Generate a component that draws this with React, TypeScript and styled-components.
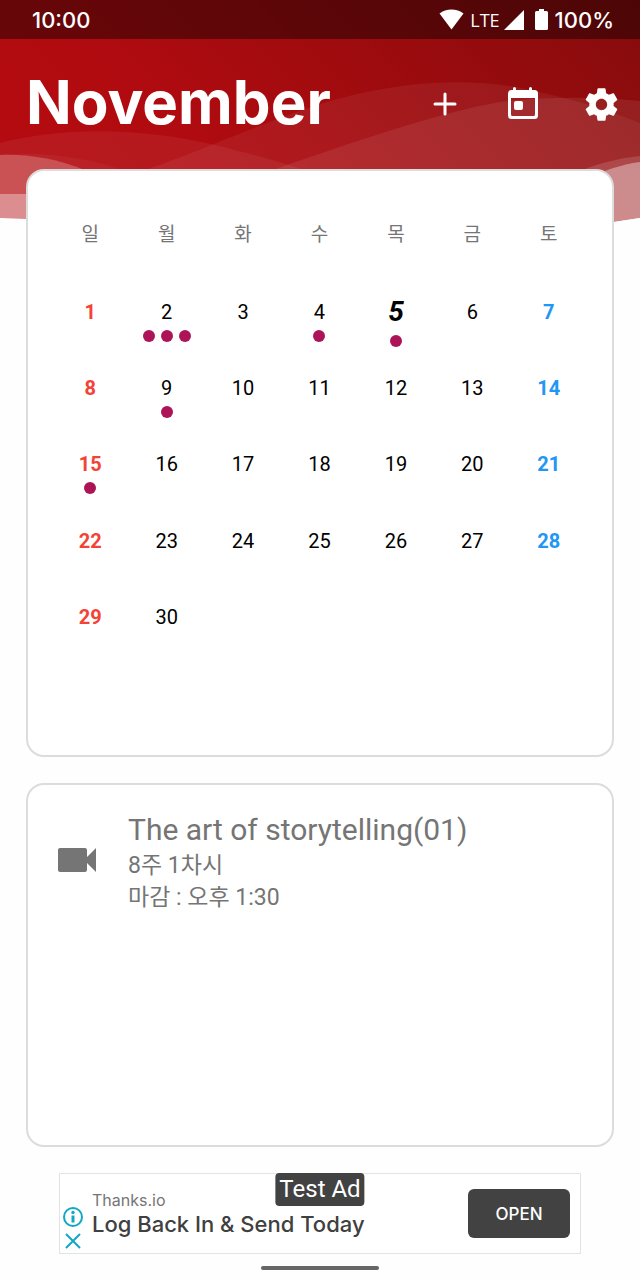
import React from "react";
import styled, { createGlobalStyle, css } from "styled-components";

const GlobalStyle = createGlobalStyle`
  *, *::before, *::after { box-sizing: border-box; }
  body {
    margin: 0;
    background: #fefefe;
    font-family: Roboto, "Noto Sans CJK KR", sans-serif;
    color: #000;
  }
`;

const Screen = styled.div`
  position: relative;
  min-height: 100vh;
  display: flex;
  flex-direction: column;
`;

const WaveBackdrop = styled.svg`
  position: absolute;
  top: 0;
  left: 0;
  z-index: -1;
  width: 100%;
  height: 224px;
`;

const StatusBar = styled.div`
  display: flex;
  align-items: center;
  justify-content: space-between;
  height: 39px;
  padding: 0 26px 0 32px;
  background: rgba(0, 0, 0, 0.42);
  color: #fff;
  font: 500 22px/28px Inter, sans-serif;
`;

const StatusIcons = styled.div`
  display: flex;
  align-items: center;
`;

const Network = styled.span`
  margin: 0 4px 0 6px;
  font: 400 18px/24px "Open Sans", sans-serif;
`;

const BatteryLevel = styled.span`
  margin-left: 7px;
`;

const SignalIcon = styled.svg`
  margin-right: 11px;
`;

const AppBar = styled.header`
  display: flex;
  align-items: center;
  height: 130px;
  padding-left: 26px;
  color: #fff;
`;

const MonthTitle = styled.h1`
  flex: 1;
  margin: 0;
  padding-bottom: 4px;
  font: 700 60px/72px Inter, sans-serif;
`;

const IconButton = styled.button`
  display: flex;
  align-items: center;
  justify-content: center;
  width: 78px;
  height: 78px;
  padding: 0;
  border: 0;
  background: none;
  color: inherit;
`;

const Content = styled.main`
  flex: 1;
  display: flex;
  flex-direction: column;
  gap: 26px;
  padding: 0 26px;
`;

const cardStyle = css`
  border: 2px solid #dcdcdc;
  border-radius: 18px;
  background: #fff;
`;

const CalendarCard = styled.section`
  ${cardStyle}
  padding: 26px 25px 23px 24px;
`;

const CalendarTable = styled.table`
  display: grid;
  grid-template: repeat(7, 1fr) / repeat(7, 1fr);
  aspect-ratio: 1;

  thead, tbody, tr { display: contents; }
`;

const Weekday = styled.th`
  display: flex;
  align-items: center;
  justify-content: center;
  padding: 0;
  color: #757575;
  font-weight: 400;
  font-size: 19px;
  line-height: 24px;
`;

type DayKind = "sunday" | "saturday" | "weekday";
const dayColors: Record<DayKind, string> = {
  sunday: "#f44336",
  saturday: "#2196f3",
  weekday: "#000",
};

const DayCell = styled.td`
  display: grid;
  grid-template-rows: 1fr auto 1fr;
  justify-items: center;
  padding: 0;
`;

const DayNumber = styled.span<{ $kind: DayKind; $today: boolean }>`
  grid-row: 2;
  color: ${(p) => dayColors[p.$kind]};
  font-size: ${(p) => (p.$today ? 28 : 20)}px;
  line-height: ${(p) => (p.$today ? 32 : 22)}px;
  font-weight: ${(p) => (p.$today || p.$kind !== "weekday" ? 700 : 400)};
  font-style: ${(p) => (p.$today ? "italic" : "normal")};
`;

const Dots = styled.span`
  grid-row: 3;
  display: flex;
  gap: 6px;
  margin-top: 7px;
`;

const Dot = styled.i`
  width: 12px;
  height: 12px;
  border-radius: 50%;
  background: #ad1457;
`;

const EventsCard = styled.section`
  ${cardStyle}
  flex: 1;
  padding: 27px 27px 27px 25px;
`;

const EventRow = styled.article`
  display: flex;
  align-items: flex-start;
  color: #757575;
`;

const EventIcon = styled.svg`
  flex: none;
  margin: 24px 27px 0 0;
`;

const EventTitle = styled.h2`
  margin: 0 0 2px;
  font-weight: 400;
  font-size: 30px;
  line-height: 36px;
`;

const EventLine = styled.p`
  margin: 0;
  font-size: 23px;
  line-height: 32px;
`;

const AdBanner = styled.aside`
  position: relative;
  display: flex;
  align-items: center;
  height: 81px;
  margin: 26px 59px 0;
  padding: 0 10px 0 3px;
  border: 1px solid #e3e3e3;
  background: #fff;
`;

const AdControls = styled.div`
  display: flex;
  flex-direction: column;
  align-self: flex-end;
  gap: 4px;
  padding-bottom: 2px;
`;

const AdControl = styled.button`
  display: flex;
  padding: 0;
  border: 0;
  background: none;
  color: #10a8c4;
`;

const AdText = styled.div`
  flex: 1;
  margin-left: 9px;
  padding-bottom: 2px;
`;

const AdSource = styled.p`
  margin: 0;
  color: #757575;
  font: 400 16px/22px Inter, sans-serif;
`;

const AdHeadline = styled.p`
  margin: 0;
  color: #404040;
  font: 500 22px/26px Inter, sans-serif;
`;

const AdLabel = styled.span`
  position: absolute;
  top: -1px;
  left: 50%;
  transform: translateX(-50%);
  padding: 0 4px;
  border-radius: 4px;
  background: #424242;
  color: #fff;
  font-size: 24px;
  line-height: 33px;
  white-space: nowrap;
`;

const OpenButton = styled.button`
  width: 102px;
  height: 49px;
  padding: 0;
  border: 0;
  border-radius: 6px;
  background: #424242;
  color: #fff;
  font: 500 17px/24px Inter, sans-serif;
`;

const HomeIndicator = styled.div`
  width: 118px;
  height: 4px;
  margin: 12px auto 10px;
  border-radius: 2px;
  background: #666;
`;

const weekdays = ["일", "월", "화", "수", "목", "금", "토"];
const eventCounts: Record<number, number> = { 2: 3, 4: 1, 5: 1, 9: 1, 15: 1 };
const today = 5;
const daysInMonth = 30;
const weeks = Array.from({ length: 5 }, (_, week) =>
  Array.from({ length: 7 }, (_, i) => week * 7 + i + 1)
);

function kindOf(column: number): DayKind {
  return column === 0 ? "sunday" : column === 6 ? "saturday" : "weekday";
}

function Waves() {
  return (
    <WaveBackdrop viewBox="0 0 640 224" preserveAspectRatio="none" aria-hidden="true">
      <defs>
        <linearGradient id="sky" gradientUnits="userSpaceOnUse" x1="0" y1="220" x2="450" y2="-230">
          <stop offset="0" stopColor="#b60b10" />
          <stop offset=".3" stopColor="#b00b10" />
          <stop offset="1" stopColor="#830c0c" />
        </linearGradient>
      </defs>
      <path fill="url(#sky)" d="M0 0H640V218L614 222H26L0 218Z" />
      <g fill="#fff">
        <path fillOpacity=".06" d="M0 143C60 127 140 127 215 145C260 156 290 165 305 170V224H0Z" />
        <path fillOpacity=".06" d="M145 170C200 152 290 110 345 97C400 83 470 76 530 90C580 101 610 111 640 123V224H145Z" />
        <path fillOpacity=".08" d="M265 173C340 146 440 112 500 102C550 96 600 97 640 101V224H265Z" />
        <path fillOpacity=".04" d="M0 155C40 151 85 157 122 170V224H0Z" />
        <path fillOpacity=".22" d="M0 155C25 154 55 158 85 170V224H0Z" />
        <path fillOpacity=".34" d="M0 194H30V224H0Z" />
        <path fillOpacity=".14" d="M582 170C600 163 620 158 640 156V224H582Z" />
        <path fillOpacity=".37" d="M605 171C615 167 630 163 640 162V224H605Z" />
      </g>
      <path fill="#fefefe" d="M0 218L26 219V224H0ZM614 222L640 218V224H614Z" />
    </WaveBackdrop>
  );
}

export default function App() {
  return (
    <>
      <GlobalStyle />
      <Screen>
        <Waves />
        <StatusBar>
          <span>10:00</span>
          <StatusIcons>
            <svg width="25" height="21" viewBox="0 0 25 21" fill="currentColor" aria-hidden="true">
              <path d="M.5 4.5C7-1 18-1 24.500 4.500L12.500 20.500Z" />
            </svg>
            <Network>LTE</Network>
            <SignalIcon width="20" height="20" viewBox="0 0 20 20" fill="currentColor" aria-hidden="true">
              <path d="M20 0V20H0Z" />
            </SignalIcon>
            <svg width="13" height="21" viewBox="0 0 13 21" fill="currentColor" aria-hidden="true">
              <path d="M4 0H9V2H11.500Q13 2 13 3.500V19.500Q13 21 11.500 21H1.500Q0 21 0 19.500V3.500Q0 2 1.500 2H4Z" />
            </svg>
            <BatteryLevel>100%</BatteryLevel>
          </StatusIcons>
        </StatusBar>
        <AppBar>
          <MonthTitle>November</MonthTitle>
          <IconButton type="button" aria-label="Add event">
            <svg width="24" height="24" viewBox="0 0 24 24" fill="none" stroke="currentColor" strokeWidth="3" strokeLinecap="round">
              <path d="M12 2V22M2 12H22" />
            </svg>
          </IconButton>
          <IconButton type="button" aria-label="Go to today">
            <svg width="32" height="36" viewBox="0 0 32 36">
              <path
                fill="currentColor"
                fillRule="evenodd"
                d="M6 2.500Q6 1 7.500 1T9 2.500V4H22V2.500Q22 1 23.500 1T25 2.500V4H27.500Q31 4 31 7.500V29.500Q31 33 27.500 33H4.500Q1 33 1 29.500V7.500Q1 4 4.500 4H6ZM4 12V28.500Q4 30 5.500 30H26.500Q28 30 28 28.500V12Z"
              />
              <rect x="7" y="15" width="9" height="9" rx="2" fill="currentColor" />
            </svg>
          </IconButton>
          <IconButton type="button" aria-label="Settings">
            <svg width="39" height="39" viewBox="0 0 24 24" fill="currentColor">
              <path d="M19.430 12.980c.04-.32.07-.64.07-.98s-.03-.66-.07-.98l2.110-1.650c.19-.15.24-.42.12-.64l-2-3.460c-.12-.22-.39-.3-.61-.22l-2.490 1c-.52-.4-1.080-.73-1.690-.98l-.38-2.650C14.460 2.180 14.250 2 14 2h-4c-.25 0-.46.18-.49.42l-.38 2.650c-.61.25-1.170.59-1.690.98l-2.490-1c-.23-.09-.49 0-.61.22l-2 3.460c-.13.22-.07.49.12.64l2.110 1.650c-.04.32-.07.65-.07.98s.03.66.07.98l-2.110 1.650c-.19.15-.24.42-.12.64l2 3.460c.12.22.39.3.61.22l2.490-1c.52.4 1.080.73 1.690.98l.38 2.650c.03.24.24.42.49.42h4c.25 0 .46-.18.49-.42l.38-2.650c.61-.25 1.170-.59 1.690-.98l2.490 1c.23.09.49 0 .61-.22l2-3.460c.12-.22.07-.49-.12-.64l-2.110-1.650zM12 15.500c-1.930 0-3.500-1.570-3.500-3.500s1.570-3.500 3.500-3.500 3.500 1.570 3.500 3.500-1.570 3.500-3.500 3.500z" />
            </svg>
          </IconButton>
        </AppBar>
        <Content>
          <CalendarCard aria-label="November">
            <CalendarTable>
              <thead>
                <tr>
                  {weekdays.map((name) => (
                    <Weekday key={name} scope="col">{name}</Weekday>
                  ))}
                </tr>
              </thead>
              <tbody>
                {weeks.map((days) => (
                  <tr key={days[0]}>
                    {days.map((day, column) => (
                      <DayCell key={day}>
                        {day <= daysInMonth && (
                          <DayNumber $kind={kindOf(column)} $today={day === today}>{day}</DayNumber>
                        )}
                        {eventCounts[day] && (
                          <Dots>
                            {Array.from({ length: eventCounts[day] }, (_, i) => <Dot key={i} />)}
                          </Dots>
                        )}
                      </DayCell>
                    ))}
                  </tr>
                ))}
              </tbody>
            </CalendarTable>
          </CalendarCard>
          <EventsCard>
            <EventRow>
              <EventIcon width="48" height="48" viewBox="0 0 24 24" fill="currentColor" aria-hidden="true">
                <path d="M17 10.500V7c0-.55-.45-1-1-1H3.500c-.55 0-1 .45-1 1v10c0 .55.45 1 1 1H16c.55 0 1-.45 1-1v-3.500l4.500 4.500V6L17 10.500z" />
              </EventIcon>
              <div>
                <EventTitle>The art of storytelling(01)</EventTitle>
                <EventLine>8주 1차시</EventLine>
                <EventLine>마감 : 오후 1:30</EventLine>
              </div>
            </EventRow>
          </EventsCard>
        </Content>
        <AdBanner>
          <AdControls>
            <AdControl type="button" aria-label="About this ad">
              <svg width="20" height="20" viewBox="0 0 20 20" fill="none" stroke="currentColor">
                <circle cx="10" cy="10" r="9" strokeWidth="2" />
                <circle cx="10" cy="5.500" r="1.700" fill="currentColor" stroke="none" />
                <path d="M10 8.500V15.500" strokeWidth="3" />
              </svg>
            </AdControl>
            <AdControl type="button" aria-label="Close ad">
              <svg width="20" height="20" viewBox="0 0 20 20" stroke="currentColor" strokeWidth="2">
                <path d="M3 3L17 17M17 3L3 17" />
              </svg>
            </AdControl>
          </AdControls>
          <AdText>
            <AdSource>Thanks.io</AdSource>
            <AdHeadline>Log Back In &amp; Send Today</AdHeadline>
          </AdText>
          <OpenButton type="button">OPEN</OpenButton>
          <AdLabel>Test Ad</AdLabel>
        </AdBanner>
        <HomeIndicator />
      </Screen>
    </>
  );
}
